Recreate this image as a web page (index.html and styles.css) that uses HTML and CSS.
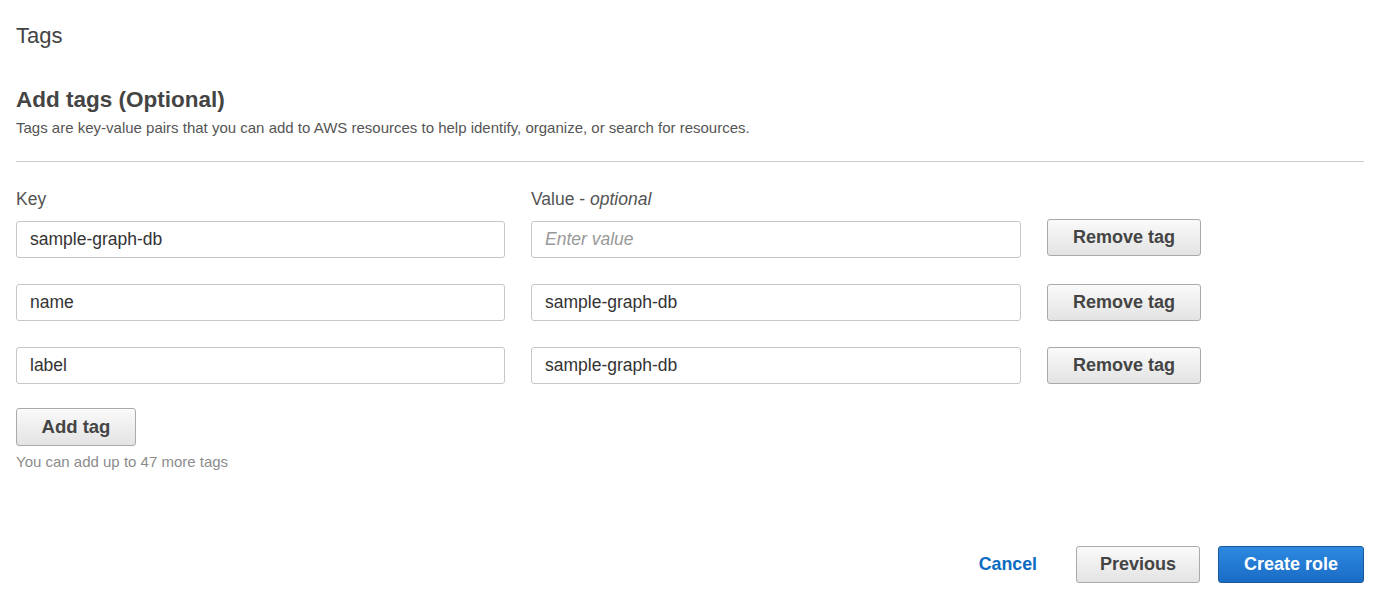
FILE: index.html
```html
<!DOCTYPE html>
<html lang="en">
<head>
<meta charset="utf-8">
<title>Tags</title>
<link rel="stylesheet" href="styles.css">
</head>
<body>
<div class="page">
  <h1 class="page-title">Tags</h1>
  <section class="section">
    <h2 class="section-title">Add tags (Optional)</h2>
    <p class="section-desc">Tags are key-value pairs that you can add to AWS resources to help identify, organize, or search for resources.</p>
    <div class="divider"></div>
    <div class="tag-grid">
      <div class="col-label">Key</div>
      <div class="col-label">Value - <em>optional</em></div>
      <div></div>

      <input class="field" type="text" value="sample-graph-db">
      <input class="field" type="text" placeholder="Enter value">
      <button class="btn btn-remove first" type="button">Remove tag</button>

      <input class="field" type="text" value="name">
      <input class="field" type="text" value="sample-graph-db">
      <button class="btn btn-remove" type="button">Remove tag</button>

      <input class="field" type="text" value="label">
      <input class="field" type="text" value="sample-graph-db">
      <button class="btn btn-remove" type="button">Remove tag</button>
    </div>
    <button class="btn btn-add" type="button">Add tag</button>
    <p class="hint">You can add up to 47 more tags</p>
  </section>
  <div class="footer">
    <a class="link-cancel" href="#">Cancel</a>
    <button class="btn btn-prev" type="button">Previous</button>
    <button class="btn btn-primary" type="button">Create role</button>
  </div>
</div>
</body>
</html>
```
FILE: styles.css
```css
html, body {
  margin: 0;
  padding: 0;
  background: #fff;
}
body {
  font-family: "Liberation Sans", Arial, sans-serif;
  color: #444;
}
.page {
  padding: 23px 16px 0 16px;
}
.page-title {
  margin: 0;
  font-size: 22px;
  font-weight: normal;
  line-height: 26px;
  color: #444;
}
.section {
  margin-top: 38px;
}
.section-title {
  margin: 0;
  font-size: 22.5px;
  font-weight: bold;
  line-height: 26px;
  color: #444;
}
.section-desc {
  margin: 6px 0 0 0;
  font-size: 15px;
  line-height: 18px;
  color: #555;
}
.divider {
  margin-top: 24px;
  height: 1px;
  background: #ccc;
}
.tag-grid {
  margin-top: 26px;
  display: grid;
  grid-template-columns: 489px 490px 154px;
  column-gap: 26px;
  row-gap: 26px;
  align-items: center;
}
.tag-grid .col-label {
  margin-top: 1px;
  margin-bottom: -14px;
  font-size: 17.5px;
  line-height: 20px;
  color: #545454;
}
.col-label em {
  font-style: italic;
}
.field {
  box-sizing: border-box;
  height: 37px;
  margin: 0;
  padding: 0 13px;
  border: 1px solid #c6c6c6;
  border-radius: 3px;
  font-family: "Liberation Sans", Arial, sans-serif;
  font-size: 17.5px;
  color: #333;
  background: #fff;
  outline: none;
}
.field::placeholder {
  color: #999;
  font-style: italic;
}
.btn {
  box-sizing: border-box;
  margin: 0;
  height: 37px;
  border: 1px solid #aaa;
  border-radius: 3px;
  background: linear-gradient(#fafafa, #e3e3e3);
  font-family: "Liberation Sans", Arial, sans-serif;
  font-size: 18px;
  font-weight: bold;
  color: #444;
  cursor: pointer;
}
.btn-remove {
  width: 154px;
}
.btn-remove.first {
  position: relative;
  top: -2px;
}
.btn-add {
  display: block;
  margin-top: 24px;
  width: 120px;
  height: 38px;
  font-size: 18.5px;
}
.hint {
  margin: 7px 0 0 0;
  font-size: 15px;
  line-height: 18px;
  color: #8c8c8c;
}
.footer {
  margin-top: 75px;
  display: flex;
  justify-content: flex-end;
  align-items: center;
}
.link-cancel {
  font-size: 17.8px;
  font-weight: bold;
  color: #0b6bc2;
  text-decoration: none;
  margin-right: 39px;
}
.btn-prev {
  width: 124px;
  margin-right: 18px;
}
.btn-primary {
  width: 146px;
  background: linear-gradient(#2d89e0, #1a6cc6);
  border-color: #1a5a9c;
  color: #fff;
}
```
